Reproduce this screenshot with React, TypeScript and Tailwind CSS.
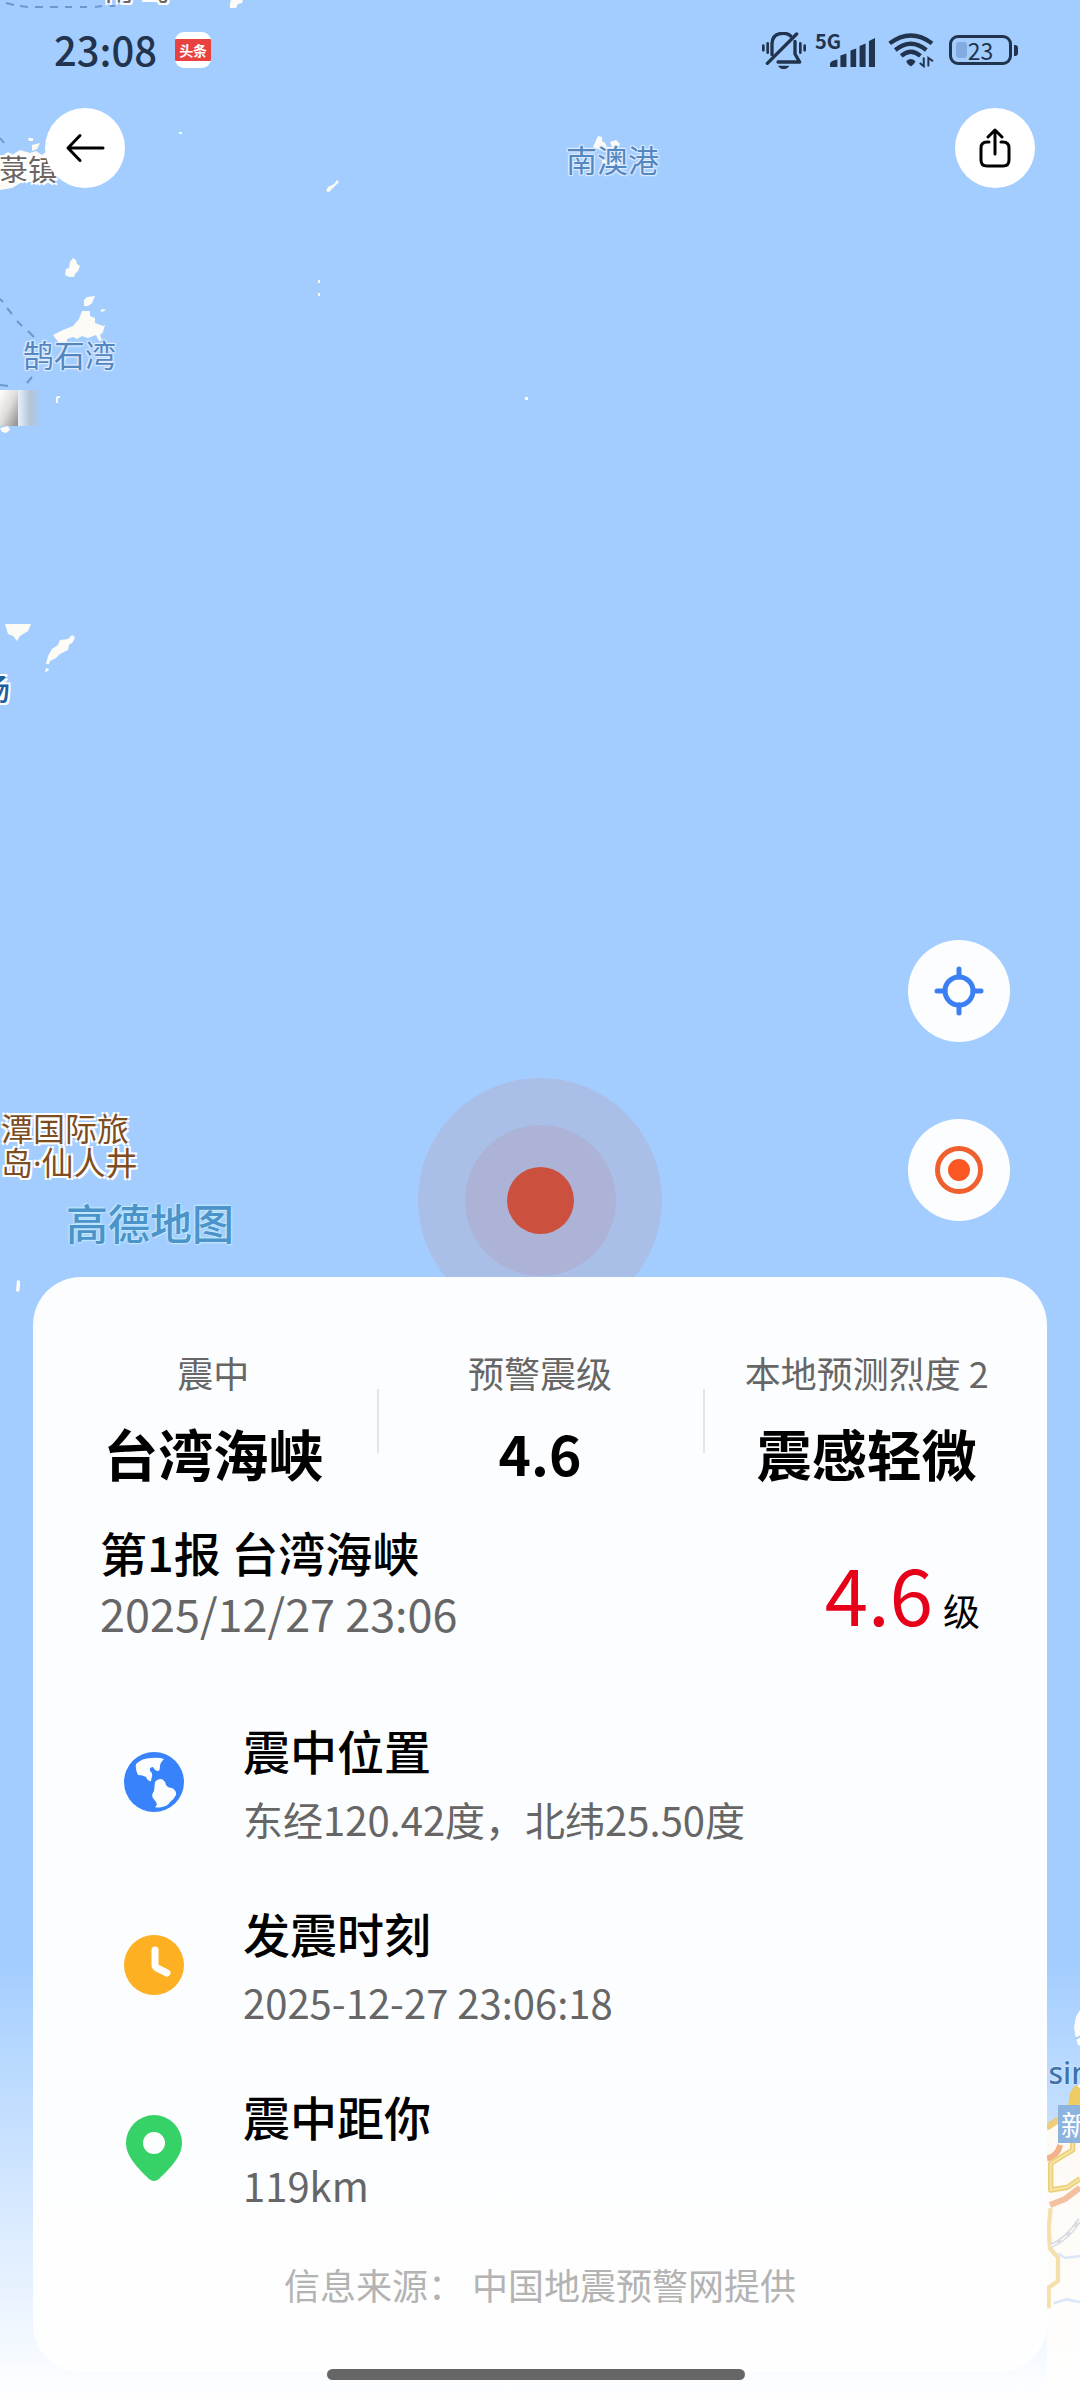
import React from "react";

const LABEL_HALO = "[text-shadow:0_0_2px_#e4f0ff,1px_1px_1px_#dcebff,-1px_-1px_1px_#dcebff,1px_-1px_1px_#dcebff,-1px_1px_1px_#dcebff]";
const WHITE_HALO = "[text-shadow:0_0_2px_#fff,2px_2px_0_#fff,-2px_-2px_0_#fff,2px_-2px_0_#fff,-2px_2px_0_#fff]";

function Islands() {
  return (
    <svg className="absolute left-0 top-0" width="680" height="1320" viewBox="0 0 680 1320" aria-hidden="true">
      <g fill="#fdfbf6">
        <path d="M231 0h12l-1 3-4 1-2 4h-6v-5z" />
        <path d="M28 138h5v3h-4zM32 145l8-2-3 6-5 2zM0 158l8-6 4 3 8-5 10 3 6-2 6 4 4-3 6 8v14l-10 8H22l-10 6-12 2z" />
        <path d="M179 132h3v2h-3zM326 191l2-4 6-3 3-4 2 2-5 5-5 5zM318 280h2v3h-2zM318 293h2v3h-2zM525 397h3v3h-3z" />
        <path d="M70 262l3-4 3 2 1 4 3 2-2 5-3 3-1 3h-5l-4-2 1-6 3-1zM84 300l3-3 8-1-3 7-4 3-4 0zM100 310l4-1 2 1-4 2z" />
        <path d="M53 335l10-5 10-4 6-7 3-8h8v5l5 2v5l8 3 2-1-2 7-3 3 2 5-3 1-3-6-8 3-6-2-5 3-4-2-6 2v10l-2 14h-4l2-15z" />
        <path d="M5 624h26l-3 7-8 5-3 5-4-5-5-2z" />
        <path d="M48 656l4-7 6-4 2-5 8-1 4-4 3 2-2 5-4 3-1 5-8 4-4 4-6 3-1 3h-3zM46 668l3 1-1 2-3 1z" />
        <path d="M598 136l4 1v4l3 2 2 4h5l-2-5 6-2 4 4-3 6-9 3-10-4-5-2zM602 160h18v6h-18z" />
        <path d="M17 1280l3 1v5l-1 6-3-1z" />
        <path d="M0 428l8-2 2 4-4 3-4-1z" />
      </g>
      <path d="M6 3l8 2M20 6l8 1M35 7h8M50 7h8M65 7h7M80 7h7M95 7l7-1M110 6h5M0 138l4 5" stroke="#6c97cf" strokeWidth="2" fill="none" />
      <path d="M0 299l3 3M7 308l5 6M17 321l5 5M28 331l6 6M32 377l-5 6M0 385l8 1" stroke="#6c97cf" strokeWidth="2" fill="none" />
      <path d="M57 397l3 0M57 397v6" stroke="#fdfbf6" strokeWidth="2" />
    </svg>
  );
}

function Coast() {
  return (
    <svg className="absolute right-0 top-[1960px]" width="33" height="440" viewBox="501 0 99 1320" aria-hidden="true">
      <defs>
        <linearGradient id="landFade" x1="0" y1="0" x2="0" y2="1">
          <stop offset="0" stopColor="#fdf9f4" />
          <stop offset="0.700" stopColor="#fefdfb" />
          <stop offset="1" stopColor="#fefefe" />
        </linearGradient>
      </defs>
      <path d="M600 150l-12 20-6 30 4 28 8 26 6 4z" fill="#fdfdfb" />
      <path d="M584 232q8 6 16-4" stroke="#a9d2ee" strokeWidth="6" fill="none" />
      <path d="M501 512l40-30 25-50 10-30 24-32v950H501z" fill="url(#landFade)" />
      <g fill="none" strokeLinejoin="round">
        <path d="M501 595q30-5 40-40" stroke="#f2b18a" strokeWidth="18" />
        <path d="M501 502l36-24" stroke="#eecd7c" strokeWidth="20" />
        <path d="M580 445l6-40 14-20" stroke="#eccb62" strokeWidth="34" />
        <path d="M578 440v130l-66 40v80l50-8 38-26" stroke="#ecd079" strokeWidth="16" />
        <path d="M578 440v130l-66 40v80l50-8 38-26" stroke="#f6e3a6" strokeWidth="6" />
        <path d="M510 735l45-18 45-34" stroke="#f4c1a0" strokeWidth="18" />
        <path d="M512 745l-6 60 4 60 24 28v70l-28 20v62" stroke="#f5e0ac" strokeWidth="13" />
        <path d="M512 858q50-20 88-80" stroke="#d9dde2" strokeWidth="14" />
        <path d="M512 858q50-20 88-80" stroke="#f7f7f7" strokeWidth="5" strokeDasharray="22 14" />
        <path d="M535 880l20 14 45-6M520 1030l40-12 40 8" stroke="#dbe7f8" strokeWidth="8" />
      </g>
    </svg>
  );
}

function MapLayer() {
  return (
    <div className="absolute inset-0 overflow-hidden bg-[#a3cdff]">
      <Islands />
      <span className={`absolute left-[104px] top-[-33px] text-[30px] leading-[40px] text-[#6b6460] ${WHITE_HALO}`}>南 岛</span>
      <span className={`absolute -left-px top-[148px] text-[29px] leading-[40px] text-[#6b6460] ${WHITE_HALO}`}>菉镇</span>
      <span className={`absolute left-[566px] top-[139px] text-[31px] leading-[40px] text-[#5487bf] ${LABEL_HALO}`}>南澳港</span>
      <span className={`absolute left-[23px] top-[334px] text-[31px] leading-[40px] text-[#5487bf] ${LABEL_HALO}`}>鹄石湾</span>
      <div className="absolute left-0 top-[390px] h-[36px] w-[18px] bg-linear-to-br from-white via-[#dedcd9] to-[#8d8a88]" />
      <div className="absolute left-[18px] top-[390px] h-[36px] w-[24px] bg-linear-to-r from-[#e6f0fb] via-[#b4c4d8] to-[#a3cdff]" />
      <span className={`absolute left-[-20px] top-[667px] text-[30px] font-medium leading-[40px] text-[#1d5f9b] ${WHITE_HALO}`}>场</span>
      <p className={`absolute left-[1px] top-[1110px] text-[32px] leading-[34px] text-[#7d4d1f] ${WHITE_HALO}`}>
        潭国际旅
        <br />
        岛<span className="font-['Noto_Sans']">·</span>仙人井
      </p>
      <span className="absolute left-[66px] top-[1197px] text-[42px] font-medium leading-[50px] text-[#4b93c8] [text-shadow:0_0_3px_#c5ecff,1px_1px_1px_#bfe6fb,-1px_-1px_1px_#bfe6fb]">
        高德地图
      </span>
      <div className="absolute inset-x-0 bottom-0 top-[1960px] bg-linear-to-b from-white/0 to-white" />
      <Coast />
      <span className="absolute right-[-10px] top-[2053px] font-['Noto_Sans'] text-[30px] font-medium leading-[40px] text-[#3f74ab] [text-shadow:0_0_2px_#fff]">sin</span>
      <span className="absolute right-[-12px] top-[2105px] bg-[#8db4df] px-[3px] text-[28px] leading-[38px] text-white">新</span>
      <div className="absolute left-1/2 top-[1200px] flex size-[244px] -translate-x-1/2 -translate-y-1/2 items-center justify-center rounded-full bg-[#a9bfe8]">
        <div className="flex size-[151px] items-center justify-center rounded-full bg-[#adb3d6]">
          <div className="size-[67px] rounded-full bg-[#cb513e]" />
        </div>
      </div>
    </div>
  );
}

function StatusBar() {
  return (
    <div className="flex h-[100px] items-center justify-between pl-[54px] pr-[62px] text-[#22344d]">
      <div className="flex items-center gap-[18px]">
        <span className="pb-[3px] text-[40px] font-medium leading-[48px]">23:08</span>
        <span className="flex size-9 items-center overflow-hidden rounded-[9px] bg-white">
          <span className="w-full bg-[#e8413f] text-center text-[14px] font-bold leading-[22px] text-white">头条</span>
        </span>
      </div>
      <div className="flex items-center">
        <svg width="44" height="37" viewBox="36 24 132 111" fill="none" stroke="currentColor" strokeWidth="10" strokeLinecap="round" aria-label="静音">
          <path d="M40 65v14M53 58v28M164 65v14M151 58v28" strokeWidth="8" />
          <path d="M66 92V58q2-30 34-30 14 0 22 8" />
          <path d="M135 52v38l14 24H84" strokeLinejoin="round" />
          <path d="M140 30L52 118" />
          <path d="M84 125h34q-6 10-17 10t-17-10z" fill="currentColor" stroke="none" />
        </svg>
        <div className="relative ml-[9px] flex h-[34px] w-[60px] items-end justify-end">
          <span className="absolute left-0 top-0 text-[20px] font-bold leading-[16px]">5G</span>
          <svg width="45" height="29" viewBox="242 36 134 86" fill="currentColor" aria-label="信号">
            <path d="M242 122v-10q2-9 22-12v22zM273 122V88l18-6v40zM303 122V73l17-6v55zM330 122V60l18-8v70zM358 122V45l18-9v86z" />
          </svg>
        </div>
        <svg className="ml-[13px]" width="46" height="36" viewBox="413 26 139 108" fill="none" stroke="currentColor" strokeWidth="13" aria-label="无线网络">
          <path d="M418 60q64-48 128 0M435 80q47-38 94 0M453 98q29-25 58 0" />
          <path d="M468 114q14-14 28 0-2 8-14 16-12-8-14-16z" fill="currentColor" stroke="none" />
          <path d="M521 103v26l-12-10M535 130v-26l14 10" strokeWidth="6" />
        </svg>
        <div className="ml-[15px] flex items-center gap-[2px]">
          <span className="relative flex h-[30px] w-[63px] items-center justify-center rounded-[9px] border-[3px] border-current">
            <span className="absolute left-1 top-1 h-4 w-[11px] rounded-[3px] bg-[#84abdf]" />
            <span className="relative text-[23px] leading-[24px]">23</span>
          </span>
          <span className="h-[11px] w-1 rounded-r-[3px] bg-current" />
        </div>
      </div>
    </div>
  );
}

function TopNav() {
  return (
    <nav className="mt-2 flex justify-between px-[45px]">
      <button aria-label="返回" className="flex size-20 items-center justify-center rounded-full bg-white">
        <svg width="40" height="30" viewBox="0 0 40 30" fill="none" stroke="#000" strokeWidth="3" strokeLinecap="round" strokeLinejoin="round">
          <path d="M38 15H3M15 2.500L3 15l12 12.500" />
        </svg>
      </button>
      <button aria-label="分享" className="flex size-20 items-center justify-center rounded-full bg-white">
        <svg width="34" height="40" viewBox="0 0 34 40" fill="none" stroke="#000" strokeWidth="3" strokeLinecap="round" strokeLinejoin="round">
          <path d="M11 14H9q-6 0-6 6v12q0 6 6 6h16q6 0 6-6V20q0-6-6-6h-2" />
          <path d="M17 26V2M10 9l7-7 7 7" />
        </svg>
      </button>
    </nav>
  );
}

function MapTools() {
  return (
    <div className="mt-[752px] flex flex-col items-end gap-[77px] pr-[70px]">
      <button aria-label="定位到我" className="flex size-[102px] items-center justify-center rounded-full bg-[#fcfdff]">
        <svg width="50" height="50" viewBox="0 0 50 50" fill="none" stroke="#3b7ff3" strokeWidth="5" strokeLinecap="round">
          <circle cx="25" cy="25" r="14" />
          <path d="M25 3v8M25 39v8M3 25h8M39 25h8" />
        </svg>
      </button>
      <button aria-label="定位到震中" className="flex size-[102px] items-center justify-center rounded-full bg-[#fcfdff]">
        <svg width="50" height="50" viewBox="0 0 50 50">
          <circle cx="25" cy="25" r="21.500" fill="none" stroke="#f0602f" strokeWidth="5" />
          <circle cx="25" cy="25" r="11" fill="#fb5723" />
        </svg>
      </button>
    </div>
  );
}

const GlobeIcon = (
  <svg width="60" height="60" viewBox="0 0 60 60" aria-hidden="true">
    <circle cx="30" cy="30" r="30" fill="#3882fb" />
    <path d="M12 12Q18 6 27 6q8-1 13 1-4 4-4 7 0 5-2 5-3 0-5-4-4 0-3 4 3 2 2 5l-1 5q-3 1-5-4-3-2-8-2-3-6-2-11z" fill="#fcfdff" />
    <path d="M31 30q2-3 6-3 4 1 5 6 2 3 6 3 5 3 4 7-2 4-6 7-2 4-8 5-4 1-7 0 3-2 1-5l-3-4q-2-3 1-7z" fill="#fcfdff" />
  </svg>
);

const ClockIcon = (
  <svg width="60" height="60" viewBox="0 0 60 60" aria-hidden="true">
    <circle cx="30" cy="30" r="30" fill="#fdb022" />
    <path d="M31 15v15q0 2 2 3l10 5" fill="none" stroke="#fff" strokeWidth="7" strokeLinecap="round" strokeLinejoin="round" />
  </svg>
);

const PinIcon = (
  <svg width="60" height="66" viewBox="-2 0 60 66" aria-hidden="true">
    <path fillRule="evenodd" d="M28 0a28 28 0 0 1 28 28c0 14-13 26-23 36q-5 4-10 0C13 54 0 42 0 28A28 28 0 0 1 28 0zm0 17a11 11 0 1 0 0 22 11 11 0 0 0 0-22z" fill="#37d267" />
  </svg>
);

const SUMMARY = [
  { label: "震中", value: "台湾海峡" },
  { label: "预警震级", value: "4.6" },
  { label: "本地预测烈度 2", value: "震感轻微" },
];

const DETAILS = [
  { icon: GlobeIcon, title: "震中位置", text: "东经120.42度，北纬25.50度" },
  { icon: ClockIcon, title: "发震时刻", text: "2025-12-27 23:06:18" },
  { icon: PinIcon, title: "震中距你", text: "119km" },
];

function QuakeCard() {
  return (
    <section className="relative mx-[33px] mt-[56px] rounded-[48px] bg-linear-to-b from-[#fbfdff] from-60% to-[#fefefe] pb-[64px] pt-[71px]">
      <div className="grid grid-cols-3 px-[17px]">
        {SUMMARY.map((item, i) => (
          <div key={item.label} className="relative text-center">
            {i > 0 && <span className="absolute left-0 top-[41px] h-16 w-[2px] bg-[#e4e5e9]" />}
            <div className="whitespace-nowrap text-[36px] leading-[48px] text-[#666]">{item.label}</div>
            <div className="mt-[24px] text-[55px] font-bold leading-[64px] text-black">{item.value}</div>
          </div>
        ))}
      </div>

      <div className="mt-[37px] flex items-end justify-between pl-[67px] pr-[67px]">
        <div>
          <h1 className="text-[47px] font-medium leading-[62px] text-black">第1报 台湾海峡</h1>
          <time className="block text-[45px] leading-[60px] text-[#666]">2025/12/27 23:06</time>
        </div>
        <div className="flex items-baseline gap-[10px] pb-[5px]">
          <span className="text-[78px] leading-[92px] text-[#e60019]">4.6</span>
          <span className="text-[37px] text-black">级</span>
        </div>
      </div>

      <ul className="mt-[77px] flex flex-col gap-[54px] pl-[91px] pr-[68px]">
        {DETAILS.map((item) => (
          <li key={item.title} className="flex items-center gap-[59px]">
            <span className="pb-[6px]">{item.icon}</span>
            <div>
              <h2 className="text-[47px] font-medium leading-[60px] text-black">{item.title}</h2>
              <p className="mt-[9px] text-[40px] leading-[60px] text-[#666]">{item.text}</p>
            </div>
          </li>
        ))}
      </ul>

      <p className="mt-[45px] text-center text-[36px] leading-[48px] text-[#b3b3b3]">信息来源： 中国地震预警网提供</p>
    </section>
  );
}

export default function App() {
  return (
    <main className="relative min-h-screen overflow-hidden pb-[22px] font-['Noto_Sans_CJK_SC',sans-serif]">
      <MapLayer />
      <div className="relative">
        <StatusBar />
        <TopNav />
        <MapTools />
        <QuakeCard />
      </div>
      <div className="absolute inset-x-0 bottom-[20px] flex justify-center pr-2">
        <div className="h-[11px] w-[418px] rounded-full bg-[#666]" />
      </div>
    </main>
  );
}
